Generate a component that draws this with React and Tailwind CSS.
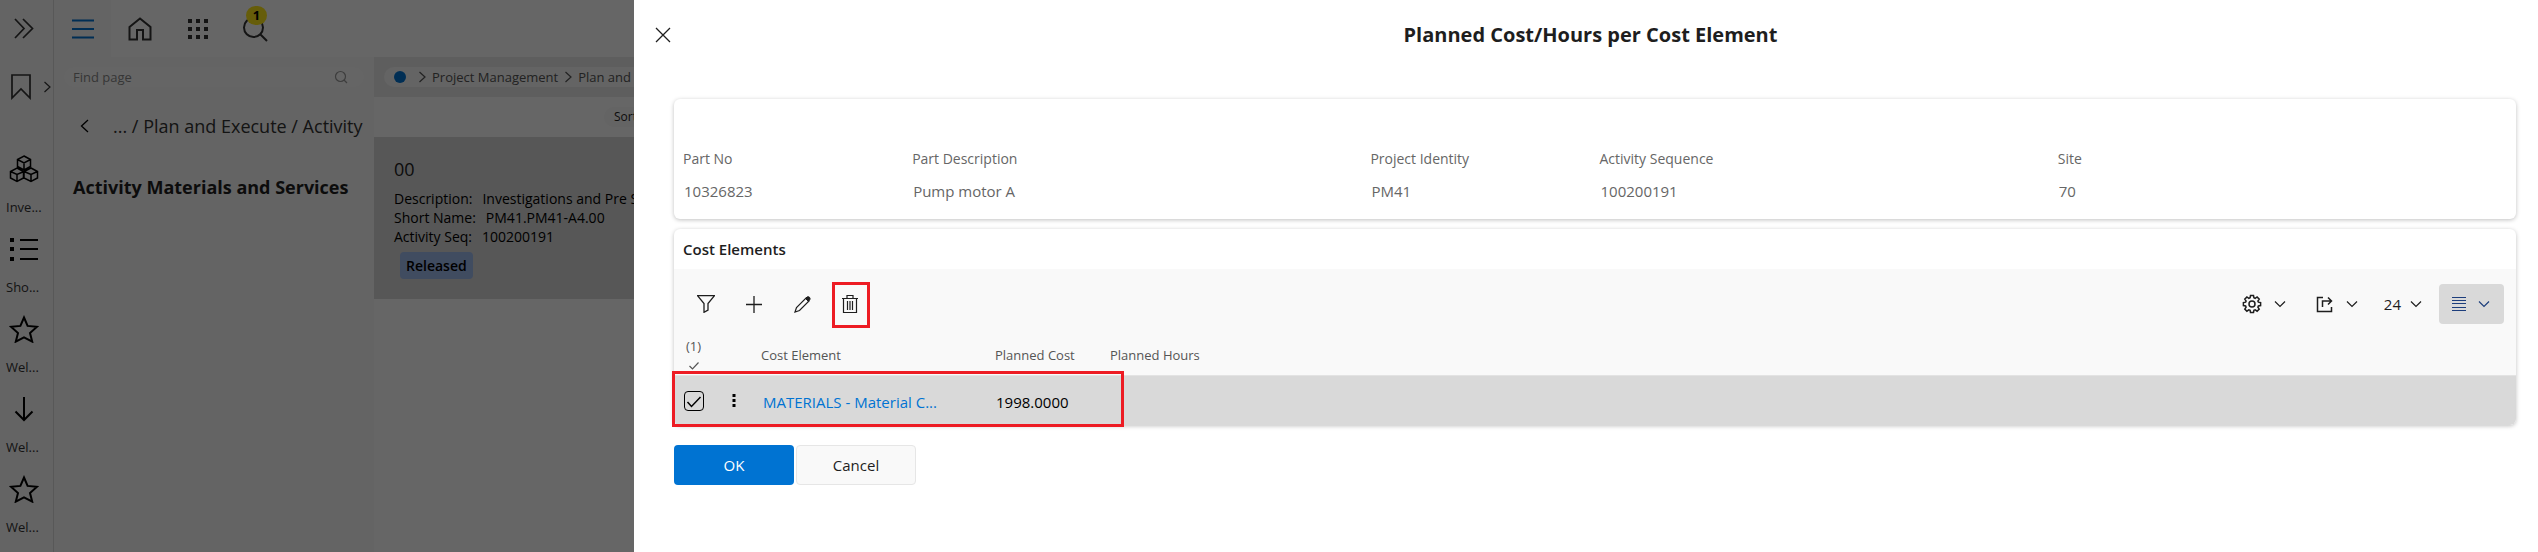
import { useState } from 'react';

const FIELDS = [
  { label: 'Part No', value: '10326823', span: 'col-span-1' },
  { label: 'Part Description', value: 'Pump motor A', span: 'col-span-2' },
  { label: 'Project Identity', value: 'PM41', span: 'col-span-1' },
  { label: 'Activity Sequence', value: '100200191', span: 'col-span-2' },
  { label: 'Site', value: '70', span: 'col-span-2' },
];

const SHORTCUTS = [
  { icon: 'boxes', label: 'Inve...' },
  { icon: 'list', label: 'Sho...' },
  { icon: 'star', label: 'Wel...' },
  { icon: 'arrow', label: 'Wel...' },
  { icon: 'star', label: 'Wel...' },
];

const ICONS = {
  expand: { w: 20, h: 21, sw: 1.7, d: 'M1 1l9 9.5L1 20M9 1l9.500 9.500L9 20' },
  bookmark: { w: 20, h: 26, sw: 1.7, d: 'M1 1h18v23l-9-9-9 9z' },
  boxes: {
    w: 30,
    h: 28,
    sw: 1.5,
    d: 'M15 1l6.500 3.500v7L15 15l-6.500-3.500v-7zM8.500 4.500L15 8l6.500-3.500M15 8v7M8 13l6.500 3.500v6.500L8 26.500 1.500 23v-6.500zM1.500 16.500L8 19.500l7-3M8 19.500v7M22 13l6.500 3.500V23L22 26.500 15 23v-6.500zM15 16.500l7 3 6.500-3M22 19.500v7',
  },
  star: { w: 30, h: 28, sw: 2, d: 'M15 2.500l3.600 8.400 9.400.9-7 6.200 2.200 8.600L15 22.300l-8.200 4.300L9 18l-7-6.200 9.400-.9z' },
  arrow: { w: 20, h: 26, sw: 2, d: 'M10 1v23M1.500 15.500L10 24l8.500-8.500' },
  menu: { w: 24, h: 20, sw: 2, d: 'M1 1.500h22M1 10h22M1 18.500h22' },
  home: { w: 24, h: 24, sw: 2, d: 'M1.500 10L12 1.500 22.500 10v12.500H15v-9.500H9v9.500H1.500z' },
  search: { w: 26, h: 26, sw: 2, d: 'M11.500 2a9.500 9.500 0 1 0 0 19 9.500 9.500 0 1 0 0-19M18 18l7 7' },
  find: { w: 14, h: 14, sw: 1.2, d: 'M6.500 1.500a5 5 0 1 0 0 10 5 5 0 1 0 0-10M10 10l3 3' },
  right: { w: 8, h: 12, sw: 1.2, d: 'M1.500 1L7 6l-5.500 5' },
  left: { w: 9, h: 14, sw: 1.3, d: 'M8 1L1.500 7 8 13' },
  down: { w: 12, h: 8, sw: 1.2, d: 'M1 1.500L6 6.500l5-5' },
  close: { w: 16, h: 16, sw: 1.3, d: 'M1 1l14 14M15 1L1 15' },
  filter: { w: 18, h: 18, sw: 1.3, d: 'M.5.7h17L11 8.500V15l-4 2.300V8.500z' },
  plus: { w: 16, h: 17, sw: 1.3, d: 'M8 0v17M0 8.500h16' },
  trash: { w: 16, h: 18, sw: 1.2, d: 'M0 3.500h16M5 3.500v-3h6v3M1.500 3.500v14h13v-14M5.500 6v9M8 6v9M10.500 6v9' },
  share: { w: 18, h: 18, sw: 1.5, d: 'M7 2.500H1.500v14h14V12M6.500 12V6h9M12 2.500L15.500 6 12 9.500' },
  rows: { w: 14, h: 14, sw: 1, d: 'M0 .5h14M0 3.500h14M0 6.500h14M0 10.500h14M0 13.500h14' },
  tick: { w: 10, h: 8, sw: 1.2, d: 'M.5 4l3 3 6-6.500' },
};

function Icon({ name, className = '' }) {
  const { w, h, sw, d } = ICONS[name];
  return (
    <svg
      width={w}
      height={h}
      viewBox={`0 0 ${w} ${h}`}
      fill="none"
      stroke="currentColor"
      strokeWidth={sw}
      className={`shrink-0 ${className}`}
      aria-hidden="true"
    >
      <path d={d} />
    </svg>
  );
}

function ListIcon() {
  return (
    <svg width="28" height="23" viewBox="0 0 28 23" fill="currentColor" aria-hidden="true">
      {[0, 9, 19].map((y) => (
        <g key={y}>
          <rect x="0" y={y} width="4" height="4" />
          <rect x="10" y={y + 1} width="18" height="2" />
        </g>
      ))}
    </svg>
  );
}

function AppsIcon() {
  return (
    <svg width="20" height="20" viewBox="0 0 20 20" fill="currentColor" aria-hidden="true">
      {[0, 8, 16].map((y) => [0, 8, 16].map((x) => <rect key={`${x}-${y}`} x={x} y={y} width="4" height="4" />))}
    </svg>
  );
}

function PencilIcon() {
  return (
    <svg width="17" height="17" viewBox="0 0 17 17" fill="none" stroke="currentColor" aria-hidden="true">
      <path d="M1 16l1.500-4.500L12 2l3 3-9.500 9.500z" strokeWidth="1.2" />
      <path d="M11.500 2.500L13 1q1.500-.8 2.500.3t.3 2.500l-1.500 1.500z" fill="currentColor" />
    </svg>
  );
}

function GearIcon() {
  return (
    <svg width="20" height="20" viewBox="0 0 20 20" fill="none" stroke="currentColor" strokeWidth="1.5" aria-hidden="true">
      <path d="M8.500 1.500h3l.4 2.200 1.300.6 1.900-1.300 2.100 2.100-1.300 1.900.5 1.200 2.200.4v3l-2.200.4-.5 1.200 1.300 1.900-2.100 2.100-1.900-1.300-1.300.5-.4 2.200h-3l-.4-2.200-1.300-.5-1.900 1.300-2.100-2.100 1.300-1.900-.5-1.200-2.200-.4v-3l2.200-.4.5-1.200-1.300-1.900 2.100-2.100 1.900 1.300 1.300-.6z" />
      <circle cx="10" cy="10" r="3" />
    </svg>
  );
}

function Rail() {
  return (
    <nav aria-label="Shortcuts" className="flex w-[54px] shrink-0 flex-col border-r border-[#dcdcdc] text-black">
      <button aria-label="Expand" className="flex h-[57px] w-12 items-center justify-center text-[#333]">
        <Icon name="expand" />
      </button>
      <button aria-label="Bookmarks" className="mb-8 flex h-[60px] items-center gap-3 pl-[11px] text-[#333]">
        <Icon name="bookmark" />
        <Icon name="right" />
      </button>
      {SHORTCUTS.map((s, i) => (
        <a key={i} href="#" className="block h-20 w-12">
          <span className="flex h-10 items-center justify-center">
            {s.icon === 'list' ? <ListIcon /> : <Icon name={s.icon} />}
          </span>
          <span className="block pl-1.5 text-[13px] leading-9 text-[#333]">{s.label}</span>
        </a>
      ))}
    </nav>
  );
}

function TopBar() {
  return (
    <header className="flex h-[57px] shrink-0 bg-white text-[#333]">
      <button aria-label="Menu" className="flex w-[57px] items-center justify-center bg-[#f9f9f9] text-[#0073d2]">
        <Icon name="menu" />
      </button>
      <button aria-label="Home" className="flex w-[58px] items-center justify-center">
        <Icon name="home" />
      </button>
      <button aria-label="Apps" className="flex w-[58px] items-center justify-center">
        <AppsIcon />
      </button>
      <button aria-label="Search" className="relative flex w-14 items-center justify-center">
        <Icon name="search" />
        <span className="absolute top-1.5 right-4 h-[19px] w-[21px] rounded-full bg-[#ffe81a] text-center text-[13px] leading-[18px] font-bold text-black">
          1
        </span>
      </button>
    </header>
  );
}

function PageMenu() {
  return (
    <aside className="w-80 shrink-0 px-2.5 pt-2.5">
      <label className="flex h-5 items-center rounded-full bg-[#fdfdfd] pr-4 pl-[9px] text-[#999]">
        <input
          type="text"
          aria-label="Find page"
          placeholder="Find page"
          className="w-full bg-transparent text-[13px] leading-5 outline-none placeholder:text-[#888]"
        />
        <Icon name="find" />
      </label>
      <div className="mt-5 flex h-[38px] items-center pl-4">
        <button aria-label="Back">
          <Icon name="left" />
        </button>
        <a href="#" className="ml-6 text-lg leading-6 whitespace-nowrap text-[#333]">
          ... / Plan and Execute / Activity
        </a>
      </div>
      <h2 className="mt-[30px] pl-[9px] text-lg leading-6 font-bold text-[#1e1e1e]">Activity Materials and Services</h2>
    </aside>
  );
}

function Activities() {
  return (
    <main className="flex min-w-0 grow flex-col">
      <div className="h-10 bg-[#ececec] px-2.5 pt-2.5">
        <nav
          aria-label="Breadcrumb"
          className="flex h-5 items-center rounded-full bg-[#f9f9f9] pl-2.5 text-[13px] leading-5 whitespace-nowrap text-[#555]"
        >
          <span className="h-3 w-3 rounded-full bg-[#0073d2]" />
          <Icon name="right" className="mr-1.5 ml-3" />
          <a href="#">Project Management</a>
          <Icon name="right" className="mx-1.5" />
          <a href="#">Plan and Execute</a>
        </nav>
      </div>
      <div className="flex h-10 items-center bg-white pl-[230px]">
        <button className="h-5 rounded-full bg-[#f9f9f9] px-2.5 text-[12px] leading-5 text-[#1e1e1e]">Sort by</button>
      </div>
      <article className="h-[162px] bg-[#d9d9d9] px-5 pt-5 text-sm leading-[19px] whitespace-nowrap">
        <h3 className="mb-2 text-lg leading-6 text-[#1e1e1e]">00</h3>
        <p className="flex gap-2.5">
          <span>Description:</span>
          <span>Investigations and Pre Study</span>
        </p>
        <p className="flex gap-2.5">
          <span>Short Name:</span>
          <span>PM41.PM41-A4.00</span>
        </p>
        <p className="flex gap-2.5">
          <span>Activity Seq:</span>
          <span>100200191</span>
        </p>
        <span className="mt-1.5 ml-1.5 inline-block rounded bg-[#a0bdf0] px-1.5 leading-[27px] font-semibold">
          Released
        </span>
      </article>
      <div className="grow bg-white" />
    </main>
  );
}

function Details() {
  return (
    <section className="grid h-[120px] grid-cols-8 rounded-md pt-[50px] pl-[9px] text-[#666] shadow-[0_1px_4px_rgba(0,0,0,0.25)]">
      {FIELDS.map((f) => (
        <dl key={f.label} className={f.span}>
          <dt className="text-sm leading-5">{f.label}</dt>
          <dd className="mt-3 pl-px text-[15px] leading-5">{f.value}</dd>
        </dl>
      ))}
    </section>
  );
}

function Toolbar() {
  return (
    <div className="flex h-10 items-center justify-between pr-3 pl-2 text-[#1e1e1e]">
      <div className="flex">
        <button aria-label="Filter" className="flex h-10 w-12 items-center justify-center">
          <Icon name="filter" />
        </button>
        <button aria-label="Add" className="flex h-10 w-12 items-center justify-center">
          <Icon name="plus" />
        </button>
        <button aria-label="Edit" className="flex h-10 w-12 items-center justify-center">
          <PencilIcon />
        </button>
        <button aria-label="Delete" className="relative flex h-10 w-12 items-center justify-center">
          <Icon name="trash" />
          <span className="absolute -top-0.5 left-1.5 h-[46px] w-[38px] border-3 border-[#ed1c24]" />
        </button>
      </div>
      <div className="flex items-center">
        <button aria-label="Settings" className="mr-[30px] flex items-center gap-3">
          <GearIcon />
          <Icon name="down" />
        </button>
        <button aria-label="Export" className="mr-[26px] flex items-center gap-3">
          <Icon name="share" />
          <Icon name="down" />
        </button>
        <button aria-label="Page size" className="mr-[17px] flex items-center gap-[9px] text-[15px] leading-5">
          24
          <Icon name="down" />
        </button>
        <button
          aria-label="View"
          className="flex h-10 w-[65px] items-center gap-3 rounded bg-[#d9d9d9] pl-[13px] text-[#1d3e7c]"
        >
          <Icon name="rows" />
          <Icon name="down" />
        </button>
      </div>
    </div>
  );
}

function CostElements() {
  const [checked, setChecked] = useState(true);
  return (
    <section className="mt-2.5 rounded-md shadow-[0_1px_4px_rgba(0,0,0,0.25)]">
      <h2 className="pl-[9px] text-[15px] leading-10 font-semibold text-[#1e1e1e]">Cost Elements</h2>
      <div className="rounded-b-md bg-[#f9f9f9] pt-[15px]">
        <Toolbar />
        <table className="w-full table-fixed border-separate border-spacing-0 text-left">
          <colgroup>
            <col className="w-10" />
            <col className="w-[37px]" />
            <col className="w-[234px]" />
            <col className="w-[115px]" />
            <col />
          </colgroup>
          <thead className="text-[13px] leading-5 text-[#555]">
            <tr className="h-[51px]">
              <th className="pt-3 pl-3 align-top font-normal">
                <span className="mb-1.5 block">(1)</span>
                <Icon name="tick" className="ml-[3px]" />
              </th>
              <th aria-label="Row menu" />
              <th className="pt-[21px] pl-2.5 align-top font-normal">Cost Element</th>
              <th className="pt-[21px] pl-2.5 align-top font-normal">Planned Cost</th>
              <th className="pt-[21px] pl-2.5 align-top font-normal">Planned Hours</th>
            </tr>
          </thead>
          <tbody className="text-[15px] leading-5 text-black">
            <tr className="h-[50px]">
              <td className="relative rounded-bl-md border-t border-[#e3e3e3] bg-[#d9d9d9] pl-2.5">
                <label className="relative block h-5 w-5">
                  <input
                    type="checkbox"
                    aria-label="Select row"
                    checked={checked}
                    onChange={(e) => setChecked(e.target.checked)}
                    className="block h-5 w-5 appearance-none rounded border border-black"
                  />
                  {checked && (
                    <svg
                      width="20"
                      height="20"
                      viewBox="0 0 20 20"
                      fill="none"
                      stroke="black"
                      strokeWidth="1.5"
                      className="pointer-events-none absolute inset-0"
                    >
                      <path d="M3.500 11l4 4.500 9-9.500" />
                    </svg>
                  )}
                </label>
                <span className="pointer-events-none absolute -top-[5px] -left-0.5 z-10 h-14 w-[452px] border-3 border-[#ed1c24]" />
              </td>
              <td className="border-t border-[#e3e3e3] bg-[#d9d9d9]">
                <button aria-label="Row menu" className="flex h-5 w-full items-center justify-center pl-[3px]">
                  <svg width="4" height="14" viewBox="0 0 4 14" aria-hidden="true">
                    <rect x="0.500" y="0" width="3" height="3" />
                    <rect x="0.500" y="5" width="3" height="3" />
                    <rect x="0.500" y="10" width="3" height="3" />
                  </svg>
                </button>
              </td>
              <td className="border-t border-[#e3e3e3] bg-[#d9d9d9] pt-0.5 pl-3">
                <a href="#" className="text-[#0073d2]">
                  MATERIALS - Material C...
                </a>
              </td>
              <td className="border-t border-[#e3e3e3] bg-[#d9d9d9] pt-0.5 pl-[11px]">1998.0000</td>
              <td className="rounded-br-md border-t border-[#e3e3e3] bg-[#d9d9d9]" />
            </tr>
          </tbody>
        </table>
      </div>
    </section>
  );
}

function Dialog() {
  return (
    <div
      role="dialog"
      aria-labelledby="dialog-title"
      className="absolute inset-y-0 right-0 w-[round(75%,1px)] bg-white pr-[22px] pl-10"
    >
      <div className="mb-7 flex h-[71px] items-start pt-[23px]">
        <button aria-label="Close" className="-ml-[19px] flex h-6 w-4 items-center text-[#1e1e1e]">
          <Icon name="close" />
        </button>
        <h1 id="dialog-title" className="grow pr-1.5 text-center text-xl leading-6 font-bold text-[#1e1e1e]">
          Planned Cost/Hours per Cost Element
        </h1>
      </div>
      <Details />
      <CostElements />
      <div className="mt-5 flex gap-0.5 text-[15px] leading-5">
        <button className="h-10 w-[120px] rounded bg-[#0073d2] text-white">OK</button>
        <button className="h-10 w-[120px] rounded border border-[#e6e6e6] bg-[#f9f9f9] text-[#1e1e1e]">Cancel</button>
      </div>
    </div>
  );
}

export default function App() {
  return (
    <div className="relative h-screen overflow-hidden bg-[#f9f9f9] font-['Open_Sans','Noto_Sans',sans-serif]">
      <div className="flex h-full">
        <Rail />
        <div className="flex min-w-0 grow flex-col">
          <TopBar />
          <div className="flex grow">
            <PageMenu />
            <Activities />
          </div>
        </div>
      </div>
      <div className="absolute inset-0 bg-black/60" />
      <Dialog />
    </div>
  );
}
